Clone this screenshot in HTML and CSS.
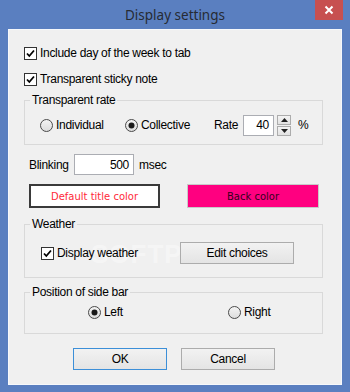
FILE: index.html
```html
<!DOCTYPE html>
<html>
<head>
<meta charset="utf-8">
<link rel="stylesheet" href="styles.css">
</head>
<body>
<div class="window">
  <div class="titlebar">
    <span class="title">Display settings</span>
    <div class="close"><svg width="10" height="10" viewBox="0 0 10 10"><path d="M1.5 1.5 L8.5 8.5 M8.5 1.5 L1.5 8.5" stroke="#fff" stroke-width="2"/></svg></div>
  </div>
  <div class="client">
    <div class="chk-row">
      <label class="check"><svg class="cb" width="13" height="13" viewBox="0 0 13 13"><rect x="0.5" y="0.5" width="12" height="12" fill="#fff" stroke="#333"/><path d="M3 6.5 L5.3 9 L10 3.5" fill="none" stroke="#000" stroke-width="1.8"/></svg><span>Include day of the week to tab</span></label>
    </div>
    <div class="chk-row">
      <label class="check"><svg class="cb" width="13" height="13" viewBox="0 0 13 13"><rect x="0.5" y="0.5" width="12" height="12" fill="#fff" stroke="#333"/><path d="M3 6.5 L5.3 9 L10 3.5" fill="none" stroke="#000" stroke-width="1.8"/></svg><span>Transparent sticky note</span></label>
    </div>

    <div class="group g-rate">
      <span class="group-title">Transparent rate</span>
      <div class="rate-row">
        <label class="radio opt-ind"><svg width="13" height="13" viewBox="0 0 13 13"><defs><linearGradient id="rg" x1="0" y1="0" x2="0" y2="1"><stop offset="0" stop-color="#f4f4f4"/><stop offset="1" stop-color="#dcdcdc"/></linearGradient></defs><circle cx="6.5" cy="6.5" r="6" fill="url(#rg)" stroke="#4a4a4a"/></svg><span>Individual</span></label>
        <label class="radio opt-col"><svg width="13" height="13" viewBox="0 0 13 13"><circle cx="6.5" cy="6.5" r="6" fill="url(#rg)" stroke="#4a4a4a"/><circle cx="6.5" cy="6.5" r="3" fill="#1a1a1a"/></svg><span>Collective</span></label>
        <span class="rate-label">Rate</span>
        <span class="input rate-input">40</span>
        <span class="spinner">
          <span class="spin"><svg width="7" height="4" viewBox="0 0 7 4"><path d="M0 4 L3.5 0 L7 4 Z" fill="#222"/></svg></span>
          <span class="spin"><svg width="7" height="4" viewBox="0 0 7 4"><path d="M0 0 L3.5 4 L7 0 Z" fill="#222"/></svg></span>
        </span>
        <span class="pct">%</span>
      </div>
    </div>

    <div class="blink-row">
      <span class="blink-label">Blinking</span>
      <span class="input blink-input">500</span>
      <span class="msec">msec</span>
    </div>

    <div class="color-row">
      <div class="color-btn title-color">Default title color</div>
      <div class="color-btn back-color">Back color</div>
    </div>

    <div class="group g-weather">
      <span class="watermark">SOFTPEDIA</span>
      <span class="group-title">Weather</span>
      <div class="weather-row">
        <label class="check weather-check"><svg class="cb" width="13" height="13" viewBox="0 0 13 13"><rect x="0.5" y="0.5" width="12" height="12" fill="#fff" stroke="#333"/><path d="M3 6.5 L5.3 9 L10 3.5" fill="none" stroke="#000" stroke-width="1.8"/></svg><span>Display weather</span></label>
        <div class="btn edit-btn">Edit choices</div>
      </div>
    </div>

    <div class="group g-pos">
      <span class="group-title">Position of side bar</span>
      <div class="pos-row">
        <label class="radio opt-left"><svg width="13" height="13" viewBox="0 0 13 13"><circle cx="6.5" cy="6.5" r="6" fill="url(#rg)" stroke="#4a4a4a"/><circle cx="6.5" cy="6.5" r="3" fill="#1a1a1a"/></svg><span>Left</span></label>
        <label class="radio"><svg width="13" height="13" viewBox="0 0 13 13"><circle cx="6.5" cy="6.5" r="6" fill="url(#rg)" stroke="#4a4a4a"/></svg><span>Right</span></label>
      </div>
    </div>

    <div class="btn-row">
      <div class="btn ok-btn">OK</div>
      <div class="btn">Cancel</div>
    </div>
  </div>
</div>
</body>
</html>
```

FILE: styles.css
```css
body {
  margin: 0;
}
.window {
  width: 350px;
  height: 392px;
  background: #5a7fc0;
  display: flex;
  flex-direction: column;
  font-family: "Liberation Sans", Arial, sans-serif;
  font-size: 12px;
  letter-spacing: -0.3px;
  color: #000;
}
.titlebar {
  height: 29px;
  position: relative;
  display: flex;
  justify-content: center;
  align-items: center;
}
.title {
  font-family: "Noto Sans", sans-serif;
  font-size: 13.5px;
  letter-spacing: 0;
  color: #262b33;
  margin-top: 1px;
}
.close {
  position: absolute;
  right: 7px;
  top: 0;
  width: 28px;
  height: 20px;
  background: #c75050;
  display: flex;
  align-items: center;
  justify-content: center;
}
.client {
  margin: 0 8px;
  height: 356px;
  box-sizing: border-box;
  border: 1px solid #f6f8fb;
  background: #f0f0f0;
  padding-top: 10px;
  display: flex;
  flex-direction: column;
}
.chk-row {
  height: 26px;
  display: flex;
  align-items: center;
  padding-left: 15px;
}
.check, .radio {
  display: flex;
  align-items: center;
  gap: 3px;
  white-space: nowrap;
}
.check svg, .radio svg {
  flex: none;
}
.group {
  margin-left: 15px;
  width: 299px;
  box-sizing: border-box;
  border: 1px solid #d9d9d9;
  display: flex;
  flex-direction: column;
  position: relative;
}
.group-title {
  align-self: flex-start;
  margin: -8px 0 0 5px;
  padding: 0 2px;
  height: 14px;
  line-height: 14px;
  background: #f0f0f0;
}
.g-rate {
  margin-top: 8px;
  height: 45px;
}
.rate-row {
  margin-top: 5px;
  height: 26px;
  display: flex;
  align-items: center;
  padding-left: 15px;
}
.opt-ind {
  width: 85px;
}
.opt-col {
  width: 89px;
}
.rate-label {
  width: 29px;
}
.input {
  box-sizing: border-box;
  background: #fff;
  border: 1px solid #abadb3;
  display: flex;
  align-items: center;
  justify-content: flex-end;
  padding-right: 4px;
}
.rate-input {
  width: 31px;
  height: 21px;
}
.spinner {
  margin-left: 3px;
  width: 14px;
  height: 21px;
  display: flex;
  flex-direction: column;
  gap: 1px;
}
.spin {
  flex: 1;
  box-sizing: border-box;
  border: 1px solid #acacac;
  background: linear-gradient(#f4f4f4, #e2e2e2);
  display: flex;
  align-items: center;
  justify-content: center;
}
.pct {
  margin-left: 7px;
}
.blink-row {
  margin-top: 9px;
  height: 21px;
  display: flex;
  align-items: center;
  padding-left: 20px;
}
.blink-label {
  width: 45px;
}
.blink-input {
  width: 60px;
  height: 21px;
}
.msec {
  margin-left: 5px;
}
.color-row {
  margin-top: 9px;
  height: 24px;
  display: flex;
  padding-left: 20px;
  gap: 27px;
}
.color-btn {
  box-sizing: border-box;
  height: 24px;
  display: flex;
  align-items: center;
  justify-content: center;
  font-family: "DejaVu Sans", Verdana, sans-serif;
  font-size: 10px;
  letter-spacing: 0;
}
.title-color {
  width: 131px;
  background: #fff;
  border: 2px solid #3a3a3a;
  color: #ff2a3a;
}
.back-color {
  width: 132px;
  background: #ff0080;
  border: 1px solid #c9c9c9;
  color: #35001c;
}
.g-weather {
  margin-top: 16px;
  height: 54px;
}
.weather-row {
  margin-top: 11px;
  height: 22px;
  display: flex;
  align-items: center;
  padding-left: 16px;
  position: relative;
}
.weather-check {
  width: 139px;
}
.btn {
  box-sizing: border-box;
  height: 22px;
  border: 1px solid #acacac;
  background: linear-gradient(#f2f2f2, #e4e4e4);
  display: flex;
  align-items: center;
  justify-content: center;
}
.edit-btn {
  width: 114px;
}
.watermark {
  position: absolute;
  left: 66px;
  top: 14px;
  font-size: 26px;
  font-weight: bold;
  letter-spacing: 1px;
  color: rgba(255, 255, 255, 0.4);
  pointer-events: none;
}
.g-pos {
  margin-top: 14px;
  height: 42px;
}
.pos-row {
  margin-top: 3px;
  height: 20px;
  display: flex;
  align-items: center;
  padding-left: 63px;
}
.opt-left {
  width: 140px;
}
.btn-row {
  margin-top: 14px;
  display: flex;
  gap: 14px;
  padding-left: 64px;
}
.btn-row .btn {
  width: 94px;
}
.ok-btn {
  border-color: #3c8fd8;
}
```
